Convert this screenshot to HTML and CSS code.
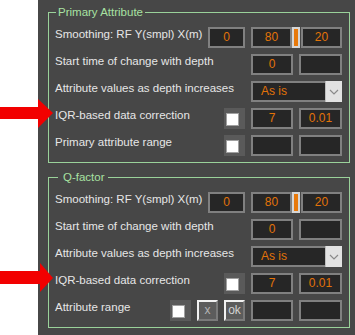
FILE: index.html
```html
<!DOCTYPE html>
<html>
<head>
<meta charset="utf-8">
<link rel="stylesheet" href="styles.css">
</head>
<body>
<div class="panel">
  <fieldset class="group">
    <legend class="legend">Primary Attribute</legend>
    <div class="row">
      <span class="label">Smoothing: RF Y(smpl) X(m)</span>
      <div class="ctrls">
        <div class="box w37">0</div>
        <div class="slider">
          <div class="box w41">80</div>
          <div class="thumb"></div>
          <div class="box w41">20</div>
        </div>
      </div>
    </div>
    <div class="row">
      <span class="label">Start time of change with depth</span>
      <div class="ctrls">
        <div class="box colb">0</div>
        <div class="box colc"></div>
      </div>
    </div>
    <div class="row">
      <span class="label">Attribute values as depth increases</span>
      <div class="ctrls">
        <div class="select">
          <span class="select-text">As is</span>
          <span class="select-btn"><svg width="10" height="6" viewBox="0 0 10 6"><path d="M1 1 L5 5 L9 1" fill="none" stroke="#8a8a8a" stroke-width="1.2"/></svg></span>
        </div>
      </div>
    </div>
    <div class="row">
      <span class="label">IQR-based data correction</span>
      <div class="ctrls">
        <div class="check"><span class="check-box"></span></div>
        <div class="box colb">7</div>
        <div class="box colc">0.01</div>
      </div>
    </div>
    <div class="row">
      <span class="label">Primary attribute range</span>
      <div class="ctrls">
        <div class="check"><span class="check-box"></span></div>
        <div class="box colb"></div>
        <div class="box colc"></div>
      </div>
    </div>
  </fieldset>

  <fieldset class="group group-q">
    <legend class="legend legend-q">Q-factor</legend>
    <div class="row">
      <span class="label">Smoothing: RF Y(smpl) X(m)</span>
      <div class="ctrls">
        <div class="box w37">0</div>
        <div class="slider">
          <div class="box w41">80</div>
          <div class="thumb"></div>
          <div class="box w41">20</div>
        </div>
      </div>
    </div>
    <div class="row">
      <span class="label">Start time of change with depth</span>
      <div class="ctrls">
        <div class="box colb">0</div>
        <div class="box colc"></div>
      </div>
    </div>
    <div class="row">
      <span class="label">Attribute values as depth increases</span>
      <div class="ctrls">
        <div class="select">
          <span class="select-text">As is</span>
          <span class="select-btn"><svg width="10" height="6" viewBox="0 0 10 6"><path d="M1 1 L5 5 L9 1" fill="none" stroke="#8a8a8a" stroke-width="1.2"/></svg></span>
        </div>
      </div>
    </div>
    <div class="row">
      <span class="label">IQR-based data correction</span>
      <div class="ctrls">
        <div class="check"><span class="check-box"></span></div>
        <div class="box colb">7</div>
        <div class="box colc">0.01</div>
      </div>
    </div>
    <div class="row">
      <span class="label">Attribute range</span>
      <div class="ctrls">
        <div class="check"><span class="check-box"></span></div>
        <div class="btn btn-x">x</div>
        <div class="btn">ok</div>
        <div class="box colb"></div>
        <div class="box colc"></div>
      </div>
    </div>
  </fieldset>
</div>

<svg class="arrow arrow-1" width="56" height="30" viewBox="0 0 56 30">
  <rect x="0" y="8" width="40" height="12" fill="#f20000"/>
  <polygon points="38,0 53,14 38,29" fill="#f20000"/>
</svg>
<svg class="arrow arrow-2" width="56" height="30" viewBox="0 0 56 30">
  <rect x="0" y="8" width="41" height="13" fill="#f20000"/>
  <polygon points="40,0 53,15 40,29" fill="#f20000"/>
</svg>
</body>
</html>
```

FILE: styles.css
```css
html, body {
  margin: 0;
  padding: 0;
  background: #ffffff;
}

body {
  position: relative;
  font-family: "Liberation Sans", Arial, sans-serif;
  font-size: 11.5px;
  width: 355px;
  height: 335px;
  overflow: hidden;
}

.panel {
  margin-left: 38px;
  height: 335px;
  box-sizing: border-box;
  background: #474747;
  padding: 5px 5px 0 10px;
}

.group {
  margin: 0;
  border: 1px solid #9ad29a;
  padding: 8px 7px 6px 6px;
  min-inline-size: 0;
  display: flex;
  flex-direction: column;
  gap: 6px;
}

.group-q {
  margin-top: 7px;
}

.legend {
  color: #a8e2a2;
  line-height: 14px;
  padding: 0 2px;
  margin-left: 1px;
}

.legend-q {
  margin-left: 3px;
  padding: 0 3px 0 5px;
}

.row {
  display: flex;
  align-items: flex-start;
  height: 21px;
}

.label {
  flex: 1;
  color: #e6e6e6;
  line-height: 14px;
  white-space: nowrap;
}

.ctrls {
  display: flex;
  gap: 6px;
  height: 21px;
}

.box {
  box-sizing: border-box;
  height: 21px;
  border: 2px solid #808080;
  background: #262626;
  color: #e27308;
  font-size: 12px;
  line-height: 17px;
  text-align: center;
}

.w37 { width: 37px; }
.w41 { width: 41px; }
.colb { width: 42px; }
.colc { width: 43px; }

.slider {
  display: flex;
  width: 91px;
}

.thumb {
  box-sizing: border-box;
  width: 8px;
  height: 21px;
  margin-right: 1px;
  border: 2px solid #d6d6d6;
  background: #e8790a;
}

.select {
  box-sizing: border-box;
  width: 91px;
  height: 21px;
  display: flex;
  border: 2px solid #808080;
  background: #262626;
}

.select-text {
  flex: 1;
  color: #e27308;
  font-size: 12px;
  line-height: 17px;
  padding-left: 8px;
}

.select-btn {
  width: 16px;
  margin: -2px -2px -2px 0;
  background: #e2e2e2;
  border-left: 1px solid #bdbdbd;
  display: flex;
  align-items: center;
  justify-content: center;
}

.check {
  box-sizing: border-box;
  width: 21px;
  height: 21px;
  background: #5a5a5a;
  padding: 5px 0 0 2px;
}

.check-box {
  display: block;
  box-sizing: border-box;
  width: 13px;
  height: 13px;
  background: #ffffff;
  border: 1px solid #a0a0a0;
}

.btn {
  box-sizing: border-box;
  width: 21px;
  height: 21px;
  background: #5c5c5c;
  border-top: 2px solid #f2f2f2;
  border-left: 2px solid #f2f2f2;
  border-right: 2px solid #7a7a7a;
  border-bottom: 2px solid #7a7a7a;
  color: #d2d2d2;
  font-size: 12px;
  line-height: 16px;
  text-align: center;
}

.btn-x {
  color: #b4b4b4;
}

.arrow {
  position: absolute;
  left: 0;
}

.arrow-1 { top: 99px; }
.arrow-2 { top: 263px; }
```
